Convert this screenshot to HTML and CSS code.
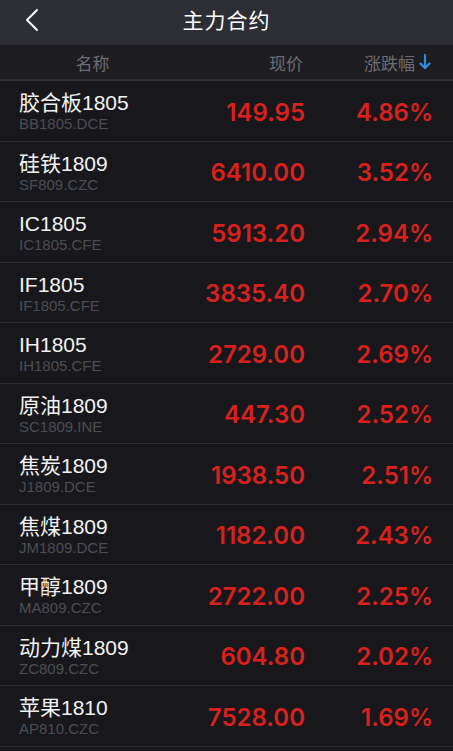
FILE: index.html
```html
<html>

<head>
    <meta charset="utf-8">
    <link rel="stylesheet" href="styles.css">
</head>

<body>
    <div class="topbar">
        <div class="back">
            <svg width="16" height="24" viewBox="0 0 16 24">
                <polyline points="13,2 3,12 13,22" fill="none" stroke="#ffffff" stroke-width="2" stroke-linecap="round" stroke-linejoin="round" />
            </svg>
        </div>
        <div class="title">主力合约</div>
        <div></div>
    </div>

    <div class="colhead">
        <div class="c-name">名称</div>
        <div class="c-price">现价</div>
        <div class="c-pct">涨跌幅<svg class="arrow" width="12" height="16" viewBox="0 0 12 16">
                <line x1="6" y1="1" x2="6" y2="14" stroke="#2f8be2" stroke-width="2.2" stroke-linecap="round" />
                <polyline points="1.5,9.5 6,14 10.5,9.5" fill="none" stroke="#2f8be2" stroke-width="2.2" stroke-linecap="round" stroke-linejoin="round" />
            </svg></div>
    </div>

    <div class="list">
        <div class="row">
            <div class="name"><div class="cn">胶合板1805</div><div class="code">BB1805.DCE</div></div>
            <div class="price">149.95</div>
            <div class="pct">4.86%</div>
        </div>
        <div class="row">
            <div class="name"><div class="cn">硅铁1809</div><div class="code">SF809.CZC</div></div>
            <div class="price">6410.00</div>
            <div class="pct">3.52%</div>
        </div>
        <div class="row">
            <div class="name"><div class="cn">IC1805</div><div class="code">IC1805.CFE</div></div>
            <div class="price">5913.20</div>
            <div class="pct">2.94%</div>
        </div>
        <div class="row">
            <div class="name"><div class="cn">IF1805</div><div class="code">IF1805.CFE</div></div>
            <div class="price">3835.40</div>
            <div class="pct">2.70%</div>
        </div>
        <div class="row">
            <div class="name"><div class="cn">IH1805</div><div class="code">IH1805.CFE</div></div>
            <div class="price">2729.00</div>
            <div class="pct">2.69%</div>
        </div>
        <div class="row">
            <div class="name"><div class="cn">原油1809</div><div class="code">SC1809.INE</div></div>
            <div class="price">447.30</div>
            <div class="pct">2.52%</div>
        </div>
        <div class="row">
            <div class="name"><div class="cn">焦炭1809</div><div class="code">J1809.DCE</div></div>
            <div class="price">1938.50</div>
            <div class="pct">2.51%</div>
        </div>
        <div class="row">
            <div class="name"><div class="cn">焦煤1809</div><div class="code">JM1809.DCE</div></div>
            <div class="price">1182.00</div>
            <div class="pct">2.43%</div>
        </div>
        <div class="row">
            <div class="name"><div class="cn">甲醇1809</div><div class="code">MA809.CZC</div></div>
            <div class="price">2722.00</div>
            <div class="pct">2.25%</div>
        </div>
        <div class="row">
            <div class="name"><div class="cn">动力煤1809</div><div class="code">ZC809.CZC</div></div>
            <div class="price">604.80</div>
            <div class="pct">2.02%</div>
        </div>
        <div class="row">
            <div class="name"><div class="cn">苹果1810</div><div class="code">AP810.CZC</div></div>
            <div class="price">7528.00</div>
            <div class="pct">1.69%</div>
        </div>
    </div>
</body>

</html>
```

FILE: styles.css
```css
body {
    margin: 0;
    background-color: #18181c;
    font-family: "Liberation Sans", "Noto Sans CJK SC", sans-serif;
    color: #ffffff;
}

.topbar {
    box-sizing: border-box;
    height: 45px;
    padding-bottom: 8px;
    background-color: #2c2e33;
    display: grid;
    grid-template-columns: 1fr auto 1fr;
    align-items: center;
}

.back {
    padding-left: 24px;
    padding-top: 2px;
    display: flex;
    align-items: center;
}

.title {
    font-size: 21px;
    letter-spacing: 1px;
    color: #ffffff;
}

.colhead {
    height: 34px;
    background-color: #1d1d21;
    border-bottom: 2px solid #2f3035;
    display: grid;
    grid-template-columns: 185px 120px 1fr;
    align-items: center;
    padding-right: 22px;
    font-size: 17px;
    color: #6b6c72;
}

.c-name {
    text-align: center;
}

.c-price,
.c-pct {
    text-align: right;
}

.c-price {
    padding-right: 2px;
}

.c-pct {
    display: flex;
    justify-content: flex-end;
    align-items: center;
}

.arrow {
    margin-left: 4px;
}

.row {
    box-sizing: border-box;
    height: 60.5px;
    border-bottom: 1px solid #2b2b30;
    display: grid;
    grid-template-columns: 185px 120px 1fr;
    align-items: center;
    padding-right: 20px;
}

.name {
    padding-left: 19px;
    padding-top: 1px;
}

.cn {
    font-size: 21px;
    line-height: 25px;
    color: #f2f2f2;
}

.code {
    font-size: 15px;
    line-height: 17px;
    color: #4b4c52;
}

.price,
.pct {
    text-align: right;
    font-family: Inter, "Liberation Sans", sans-serif;
    font-weight: 600;
    font-size: 24px;
    color: #d8211d;
    padding-top: 3px;
}
```
